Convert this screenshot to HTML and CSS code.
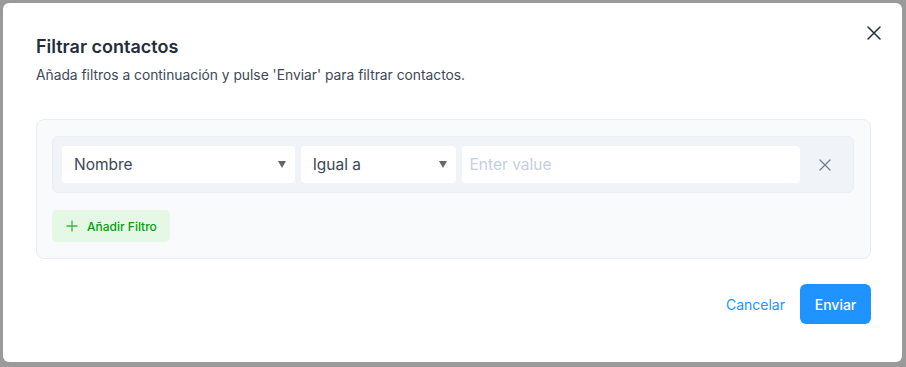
FILE: index.html
```html
<!DOCTYPE html>
<html lang="es">
<head>
<meta charset="utf-8">
<title>Filtrar contactos</title>
<link rel="stylesheet" href="styles.css">
</head>
<body>
<div class="modal">
  <button class="modal-close" aria-label="Cerrar">
    <svg width="14" height="14" viewBox="0 0 14 14"><path d="M1 1L13 13M13 1L1 13" stroke="#1f2d3d" stroke-width="1.5" stroke-linecap="round"/></svg>
  </button>
  <header class="modal-header">
    <h2 class="title">Filtrar contactos</h2>
    <p class="subtitle">Añada filtros a continuación y pulse 'Enviar' para filtrar contactos.</p>
  </header>
  <section class="filters">
    <div class="filter-row">
      <div class="select sel-attr"><span>Nombre</span><i class="caret"></i></div>
      <div class="select sel-op"><span>Igual a</span><i class="caret"></i></div>
      <div class="value-input"><span class="placeholder">Enter value</span></div>
      <button class="row-remove" aria-label="Eliminar">
        <svg width="12" height="12" viewBox="0 0 12 12"><path d="M1 1L11 11M11 1L1 11" stroke="#6b7c93" stroke-width="1.2" stroke-linecap="round"/></svg>
      </button>
    </div>
    <button class="add-filter">
      <svg width="12" height="12" viewBox="0 0 12 12"><path d="M6 0.5V11.5M0.5 6H11.5" stroke="#3fb34a" stroke-width="1.3"/></svg>
      <span>Añadir Filtro</span>
    </button>
  </section>
  <footer class="modal-footer">
    <button class="btn-link">Cancelar</button>
    <button class="btn-primary">Enviar</button>
  </footer>
</div>
</body>
</html>
```
FILE: styles.css
```css
* { box-sizing: border-box; }
html, body { margin: 0; padding: 0; }
body {
  width: 906px;
  height: 367px;
  background: #9a9a9a;
  font-family: Inter, "Noto Sans", sans-serif;
  padding: 3px 4px 5px 3px;
  overflow: hidden;
}
button { font-family: inherit; border: none; background: none; cursor: pointer; padding: 0; }
.modal {
  position: relative;
  width: 899px;
  height: 359px;
  background: #fff;
  border-radius: 6px;
  padding: 32px 31px 0 33px;
  display: flex;
  flex-direction: column;
}
.modal-close {
  position: absolute;
  top: 22px;
  right: 20px;
  width: 16px;
  height: 16px;
  display: flex;
  align-items: center;
  justify-content: center;
}
.title {
  margin: 0;
  font-size: 18px;
  line-height: 24px;
  font-weight: 600;
  color: #1f2d3d;
}
.subtitle {
  margin: 6px 0 0;
  font-size: 13.8px;
  line-height: 20px;
  color: #3c4858;
}
.filters {
  margin-top: 34px;
  background: #f8fafc;
  border: 1px solid #e8edf3;
  border-radius: 8px;
  padding: 16px 16px 16px 15px;
  display: flex;
  flex-direction: column;
  align-items: flex-start;
  gap: 17px;
}
.filter-row {
  width: 100%;
  background: #f0f3f7;
  border: 1px solid #ebeff4;
  border-radius: 6px;
  padding: 9px;
  display: flex;
  align-items: center;
  gap: 6px;
}
.select, .value-input {
  height: 37px;
  background: #fff;
  border-radius: 4px;
  display: flex;
  align-items: center;
  font-size: 15.5px;
  color: #3c4858;
}
.select { justify-content: space-between; padding: 0 9px 0 12px; }
.sel-attr { width: 233px; }
.sel-op { width: 155px; }
.value-input { width: 339px; padding: 0 8px; }
.placeholder { color: #c5d0de; }
.caret {
  width: 0; height: 0;
  border-left: 4.5px solid transparent;
  border-right: 4.5px solid transparent;
  border-top: 7px solid #666;
}
.row-remove {
  width: 38px;
  height: 37px;
  display: flex;
  align-items: center;
  justify-content: center;
}
.add-filter {
  height: 32px;
  width: 118px;
  background: #e4f8e5;
  border-radius: 5px;
  display: flex;
  align-items: center;
  gap: 9px;
  padding-left: 14px;
  font-size: 12px;
  font-weight: 500;
  color: #0b9b0f;
}
.modal-footer {
  margin-top: 25px;
  display: flex;
  justify-content: flex-end;
  align-items: center;
  gap: 14px;
}
.btn-link {
  font-size: 14px;
  color: #1f93ff;
  height: 40px;
  padding: 0 1px;
}
.btn-primary {
  height: 40px;
  width: 71px;
  background: #1f93ff;
  color: #fff;
  font-size: 14px;
  font-weight: 500;
  border-radius: 6px;
}
```
